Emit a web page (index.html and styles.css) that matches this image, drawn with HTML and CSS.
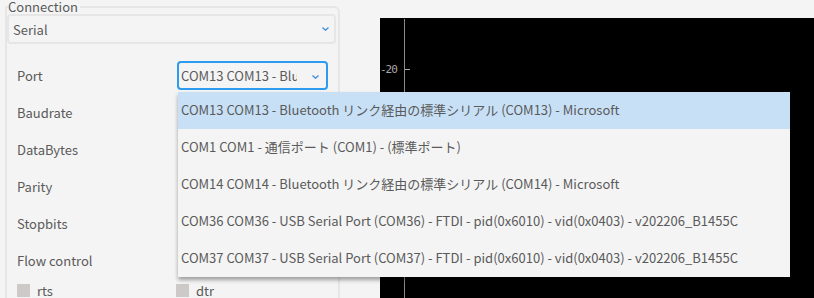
FILE: index.html
```html
<!DOCTYPE html>
<html lang="ja">

<head>
  <meta charset="UTF-8">
  <meta name="viewport" content="width=device-width, initial-scale=1.0">
  <title>Serial Monitor</title>
  <link rel="stylesheet" href="styles.css">
</head>

<body>

  <div class="sidebar">
    <fieldset class="connection">
      <legend>Connection</legend>

      <div class="select select-wide">
        <span>Serial</span>
        <svg class="chevron" width="7" height="4" viewBox="0 0 7 4"><path d="M0.5 0.5 L3.5 3.2 L6.5 0.5" fill="none" stroke="#3d8fd8" stroke-width="1.3"/></svg>
      </div>

      <div class="form-row">
        <label>Port</label>
        <div class="port-wrap">
          <div class="select select-port">
            <span class="clip">COM13 COM13 - Bluetooth</span>
            <svg class="chevron" width="7" height="4" viewBox="0 0 7 4"><path d="M0.5 0.5 L3.5 3.2 L6.5 0.5" fill="none" stroke="#3d8fd8" stroke-width="1.3"/></svg>
          </div>

          <ul class="dropdown">
            <li class="selected">COM13 COM13 - Bluetooth リンク経由の標準シリアル (COM13) - Microsoft</li>
            <li>COM1 COM1 - 通信ポート (COM1) - (標準ポート)</li>
            <li>COM14 COM14 - Bluetooth リンク経由の標準シリアル (COM14) - Microsoft</li>
            <li>COM36 COM36 - USB Serial Port (COM36) - FTDI - pid(0x6010) - vid(0x0403) - v202206_B1455C</li>
            <li>COM37 COM37 - USB Serial Port (COM37) - FTDI - pid(0x6010) - vid(0x0403) - v202206_B1455C</li>
          </ul>
        </div>
      </div>

      <div class="form-row"><label>Baudrate</label></div>
      <div class="form-row"><label>DataBytes</label></div>
      <div class="form-row"><label>Parity</label></div>
      <div class="form-row"><label>Stopbits</label></div>
      <div class="form-row"><label>Flow control</label></div>

      <div class="check-row">
        <div class="check"><span class="box"></span>rts</div>
        <div class="check"><span class="box"></span>dtr</div>
      </div>
    </fieldset>
  </div>

  <div class="chart">
    <div class="axis">
      <div class="tick">
        <span class="tick-label">-20</span>
        <span class="tick-mark"></span>
      </div>
    </div>
  </div>

</body>

</html>
```

FILE: styles.css
```css
html,
body {
  height: 298px;
  overflow: hidden;
}

body {
  margin: 0;
  background-color: #f4f4f4;
  font-family: "Noto Sans CJK JP", sans-serif;
  font-size: 13px;
  color: #5a5a5a;
  display: flex;
}

.sidebar {
  width: 340px;
  flex-shrink: 0;
}

.connection {
  margin: 0 0 0 5px;
  padding: 0 2px 0 0;
  height: 400px;
  border: 2px solid #e6e6e6;
  border-radius: 0 6px 0 0;
  min-width: 0;
}

.connection legend {
  padding: 0 2px 0 0;
  margin-left: 1px;
  line-height: 14px;
  color: #5a5a5a;
}

.select {
  display: flex;
  align-items: center;
  box-sizing: border-box;
  background-color: #f4f4f4;
  border-radius: 4px;
  position: relative;
}

.select-wide {
  height: 30px;
  padding-left: 4px;
  border: 2px solid #e6e6e6;
  margin-bottom: 13px;
}

.select-port {
  width: 151px;
  height: 29px;
  padding-left: 2px;
  border: 2px solid #2d9bf0;
}

.clip {
  width: 116px;
  overflow: hidden;
  white-space: nowrap;
}

.chevron {
  position: absolute;
  right: 7px;
  top: 12px;
}

.select-wide .chevron {
  right: 5px;
  top: 11px;
}

.form-row {
  height: 37px;
  display: flex;
  align-items: center;
  padding-left: 10px;
}

.form-row label {
  width: 160px;
}

.port-wrap {
  position: relative;
}

.dropdown {
  position: absolute;
  left: 1px;
  top: 31px;
  width: 612px;
  margin: 0;
  padding: 0;
  list-style: none;
  background-color: #f4f4f4;
  box-shadow: 0 3px 4px rgba(0, 0, 0, 0.35);
  z-index: 2;
}

.dropdown li {
  height: 37px;
  line-height: 36px;
  padding-left: 3px;
  white-space: nowrap;
}

.dropdown li.selected {
  background-color: #c7e0f6;
}

.check-row {
  display: flex;
  height: 22px;
  align-items: center;
  padding-left: 10px;
}

.check {
  width: 159px;
  display: flex;
  align-items: center;
}

.box {
  width: 13px;
  height: 13px;
  background-color: #cdc9c8;
  margin-right: 7px;
}

.chart {
  margin: 18px 0 0 40px;
  flex: 1;
  background-color: #000;
  height: 300px;
  position: relative;
}

.axis {
  margin-left: 24px;
  margin-top: 1px;
  height: 300px;
  border-left: 1px solid #8a8a8a;
}

.tick {
  position: absolute;
  left: 0;
  top: 45px;
  display: flex;
  align-items: center;
}

.tick-label {
  width: 19px;
  font-family: "DejaVu Sans Mono", monospace;
  font-size: 11px;
  color: #aaa;
  letter-spacing: -1px;
}

.tick-mark {
  margin-left: 6px;
  width: 5px;
  height: 1px;
  background-color: #aaa;
}
```
